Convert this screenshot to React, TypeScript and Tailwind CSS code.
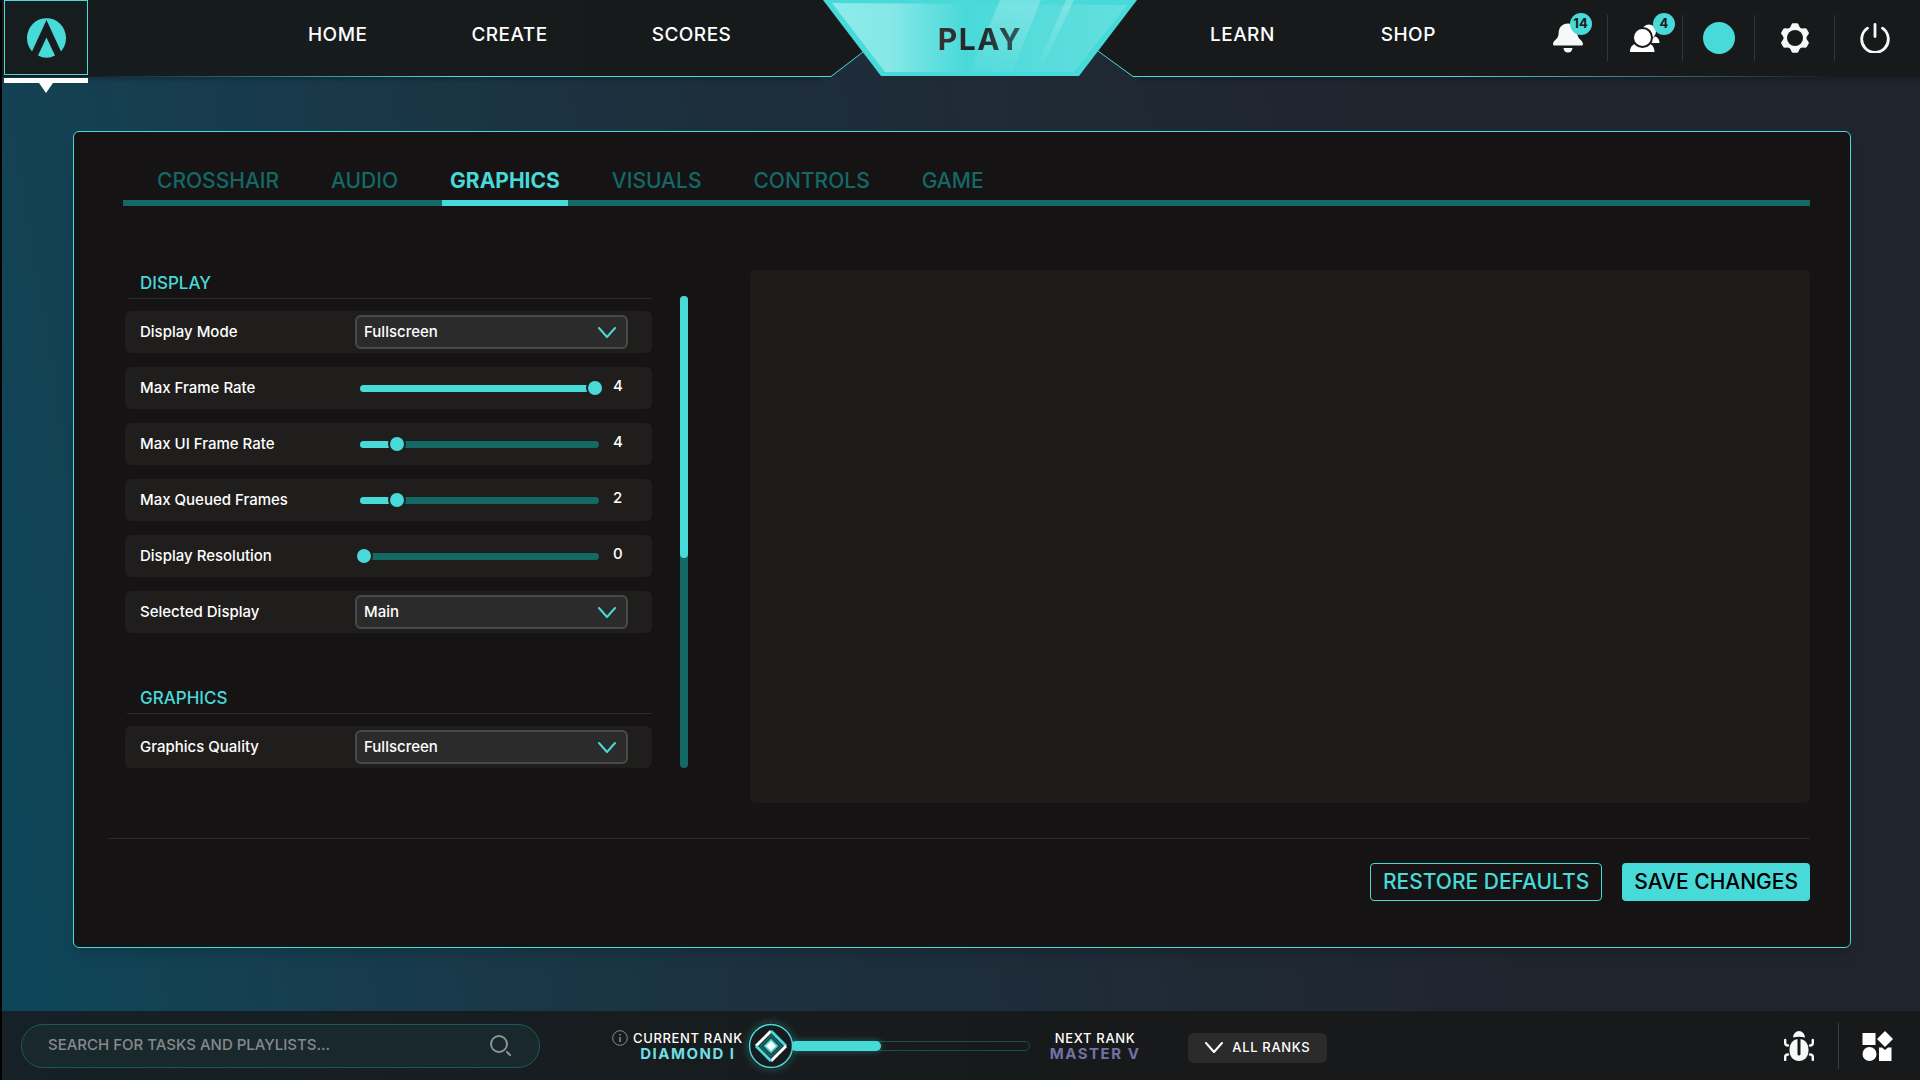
import clsx from 'clsx'
import React, { useId, useState } from 'react'

const TABS = ['CROSSHAIR', 'AUDIO', 'GRAPHICS', 'VISUALS', 'CONTROLS', 'GAME']

const Logo = () => (
  <svg width="39" height="41" viewBox="0 0 39 41" fill="#48d9d9">
    <path d="M5 34.5A19.5 20 0 1 1 34 34.5L19.5 3Z" />
    <path d="M19.5 20.5L28 38.6Q19.5 43 11 38.6Z" />
  </svg>
)

const BellIcon = () => (
  <svg width="30" height="30" viewBox="0 0 30 30" fill="#f7f8f8">
    <path d="M15 0.500C9 0.500 5.600 4.800 5.600 10.500C5.600 16.500 0 17 0 21Q0 22.500 1.500 22.500H28.500Q30 22.500 30 21C30 17 24.400 16.500 24.400 10.500C24.400 4.800 21 0.500 15 0.500Z" />
    <path d="M10.500 25H19.500A4.500 4.500 0 0 1 10.500 25Z" />
  </svg>
)

const FriendsIcon = () => (
  <svg width="30" height="28" viewBox="0 0 30 28" fill="#fff">
    <circle cx="19" cy="7.500" r="7" />
    <path d="M21 19C21 15 23 13 25.500 12.500C28 13.500 29.500 16 29.500 19Z" />
    <path d="M0 28C0 22.500 3 20 7 19.500L12.500 21L18 19.500C22 20 24.500 23 24.500 28Z" />
    <circle cx="12.500" cy="13.500" r="9.500" stroke="#17191a" strokeWidth="2" />
  </svg>
)

const GearIcon = () => (
  <svg width="30" height="30" viewBox="0 0 30 30">
    <g fill="#f7f8f8">
      <circle cx="15" cy="15" r="11.500" />
      {[0, 60, 120, 180, 240, 300].map((deg) => (
        <path
          key={deg}
          d="M9.500 6L11.500 1.500Q12 0.300 13 0.300H17Q18 0.300 18.500 1.500L20.500 6Z"
          transform={`rotate(${deg} 15 15)`}
        />
      ))}
    </g>
    <circle cx="15" cy="15" r="8" fill="#17191a" />
  </svg>
)

const PowerIcon = () => (
  <svg
    width="30"
    height="30"
    viewBox="0 0 30 30"
    fill="none"
    stroke="#f7f8f8"
    strokeWidth="2.800"
    strokeLinecap="round"
  >
    <path d="M15 1.500V13.500" />
    <path d="M7.500 5.200A13.300 13.300 0 1 0 22.500 5.200" />
  </svg>
)

const SearchIcon = () => (
  <svg
    width="22"
    height="22"
    viewBox="0 0 22 22"
    fill="none"
    stroke="#8b9293"
    strokeWidth="2"
    strokeLinecap="round"
  >
    <circle cx="9" cy="9" r="8" />
    <path d="M17 17L20 20" />
  </svg>
)

const Chevron = ({ className }: { className?: string }) => (
  <svg
    width="18"
    height="11"
    viewBox="0 0 18 11"
    fill="none"
    stroke="currentColor"
    strokeWidth="2"
    strokeLinecap="round"
    strokeLinejoin="round"
    className={className}
  >
    <path d="M1 1L9 10L17 1" />
  </svg>
)

const BugIcon = () => (
  <svg width="30" height="30" viewBox="0 0 30 30" fill="#f7f8f8">
    <path d="M9 6.500A6 6.500 0 0 1 21 6.500Q15 5 9 6.500Z" />
    <path d="M15 8C9 8 5.500 12.500 5.500 19C5.500 26 9.500 30 15 30S24.500 26 24.500 19C24.500 12.500 21 8 15 8Z" />
    <path d="M15 8V23" stroke="#17191a" strokeWidth="3" strokeLinecap="round" />
    <g fill="none" stroke="#f7f8f8" strokeWidth="2.400" strokeLinecap="round">
      <path d="M1.200 9V12Q1.200 14.500 4 14.500" />
      <path d="M28.800 9V12Q28.800 14.500 26 14.500" />
      <path d="M1.200 29V26Q1.200 23.500 4 23.500" />
      <path d="M28.800 29V26Q28.800 23.500 26 23.500" />
    </g>
  </svg>
)

const AppsIcon = () => (
  <svg width="31" height="30" viewBox="0 0 31 30" fill="#fff">
    <path d="M0.500 2H13.500V14H0.500Z" />
    <path d="M23 0L31 8L23 16L15 8Z" />
    <circle cx="7.500" cy="23" r="7" />
    <path d="M17 16.500H20L23 19L26 16.500H29.500V30H17Z" />
  </svg>
)

const RankEmblem = () => (
  <svg width="46" height="46" viewBox="0 0 46 46" fill="none">
    <circle cx="23" cy="23" r="21.500" fill="#171b1d" stroke="#48d9d9" strokeWidth="1.500" />
    <path d="M8 23L23 8" stroke="#fff" strokeWidth="3" />
    <path d="M23 8L38 23" stroke="#48d9d9" strokeWidth="3" />
    <path d="M38 23L23 38" stroke="#fff" strokeWidth="3" />
    <path d="M23 38L8 23" stroke="#48d9d9" strokeWidth="3" />
    <path d="M23 12.500L33.500 23L23 33.500L12.500 23Z" stroke="#146866" strokeWidth="2" />
    <path d="M23 15.500L30.500 23L23 30.500L15.500 23Z" fill="#48d9d9" stroke="#2f9c9c" />
    <path d="M23 18L28 23L23 28L18 23Z" fill="#fff" />
  </svg>
)

const InfoIcon = () => (
  <svg width="16" height="16" viewBox="0 0 16 16" fill="none" stroke="#85898a">
    <circle cx="8" cy="8" r="7.300" />
    <path d="M8 7V12M8 4V5.500" strokeWidth="1.500" />
  </svg>
)

const PlayBadge = () => (
  <svg width="320" height="77" viewBox="0 0 320 77" fill="none">
    <defs>
      <linearGradient id="playFill">
        <stop offset="0" stopColor="#8deaea" />
        <stop offset="0.200" stopColor="#86e8e8" />
        <stop offset="0.450" stopColor="#4ad9d9" />
        <stop offset="0.700" stopColor="#56dcdb" />
        <stop offset="1" stopColor="#62dfde" />
      </linearGradient>
      <linearGradient id="shine" x1="0" y1="0" x2="0" y2="1">
        <stop offset="0" stopColor="#fff" stopOpacity="0.240" />
        <stop offset="1" stopColor="#fff" stopOpacity="0.030" />
      </linearGradient>
    </defs>
    <path d="M0 0H3L43 52L11 76H0Z" fill="#17191a" />
    <path d="M320 0H317L278 51L313 76H320Z" fill="#17191a" />
    <path d="M0 76.500H11L43 52M278 51L313 76.500H320" stroke="#48d9d9" />
    <path d="M3 0H317L259 76H61Z" fill="#48d9d9" />
    <path d="M12 3L307 5L254 72H65Z" fill="url(#playFill)" />
    <path d="M180 0H221L192 72H150Z" fill="url(#shine)" />
    <path d="M246 0H254L223 66H217Z" fill="url(#shine)" />
  </svg>
)

const NavLink = ({ children }: { children: React.ReactNode }) => (
  <a href="#" className="text-[19px] leading-6 font-medium tracking-wide text-white">
    {children}
  </a>
)

const Badge = ({ count, className }: { count: number; className: string }) => (
  <span
    className={clsx(
      'absolute flex size-[22px] items-center justify-center rounded-full bg-[#48d9d9] text-[13px] font-bold text-[#17191a]',
      className
    )}
  >
    {count}
  </span>
)

const Header = () => (
  <header className="grid grid-cols-[818fr_320px_780fr]">
    <div className="flex h-[77px] bg-linear-to-r from-[#161d1f] to-[#17191a] shadow-[0_3px_4px_#0003]">
      <a
        href="#"
        aria-label="Home"
        className="relative z-10 ml-[2px] flex h-[75px] w-[84px] shrink-0 items-center justify-center border border-[#48d9d9] bg-[#171d1f] pb-px"
      >
        <Logo />
        <span className="absolute top-[77px] -left-px h-[5px] w-[84px] bg-white" />
        <span className="absolute top-[82px] border-x-[7px] border-t-[10px] border-x-transparent border-t-white" />
      </a>
      <div className="flex flex-1 flex-col">
        <nav className="flex h-[76px] items-center gap-[104px] pb-[6px] pl-[220px]">
          <NavLink>HOME</NavLink>
          <NavLink>CREATE</NavLink>
          <NavLink>SCORES</NavLink>
        </nav>
        <div className="h-px bg-linear-to-r from-transparent via-[#48d9d9] via-50% to-[#48d9d9]" />
      </div>
    </div>

    <a href="#" className="relative block h-[77px]">
      <PlayBadge />
      <span className="absolute inset-0 flex items-center justify-center bg-linear-to-r from-[#333] from-40% via-[#1f1f1f] via-48% to-[#2f6a6d] to-65% bg-clip-text text-3xl font-bold tracking-wider text-transparent">
        PLAY
      </span>
    </a>

    <div className="flex h-[77px] flex-col bg-[#17191a] shadow-[0_3px_4px_#0003]">
      <div className="flex h-[76px] items-center justify-between">
        <nav className="flex gap-[106px] pb-[6px] pl-[70px]">
          <NavLink>LEARN</NavLink>
          <NavLink>SHOP</NavLink>
        </nav>
        <div className="flex h-[46px] items-center divide-x divide-[#333536] pr-[5px]">
          <button aria-label="Notifications" className="flex h-full w-20 items-center justify-center">
            <span className="relative">
              <BellIcon />
              <Badge count={14} className="-top-[10px] -right-[9px]" />
            </span>
          </button>
          <button aria-label="Friends" className="flex h-full w-[75px] items-center justify-center">
            <span className="relative">
              <FriendsIcon />
              <Badge count={4} className="-top-[11px] -right-[15px]" />
            </span>
          </button>
          <button aria-label="Profile" className="flex h-full w-[72px] items-center justify-center">
            <span className="size-8 rounded-full bg-[#48d9d9]" />
          </button>
          <button aria-label="Settings" className="flex h-full w-20 items-center justify-center">
            <GearIcon />
          </button>
          <button aria-label="Quit" className="flex h-full w-20 items-center justify-center">
            <PowerIcon />
          </button>
        </div>
      </div>
      <div className="h-px bg-linear-to-r from-[#48d9d9] from-40% to-transparent to-90%" />
    </div>
  </header>
)

const ROW = 'flex h-[42px] items-center rounded-md bg-[#1f1e1c] pl-[15px]'
const LABEL = 'w-[215px] shrink-0 text-[15px] font-medium text-white'

interface SelectRowProps {
  label: string
  options: string[]
}

const SelectRow: React.FC<SelectRowProps> = ({ label, options }) => {
  const id = useId()

  return (
    <div className={ROW}>
      <label htmlFor={id} className={LABEL}>
        {label}
      </label>
      <div className="relative mr-6 flex-1">
        <select
          id={id}
          className="block h-[34px] w-full appearance-none rounded-md border-2 border-[#484949] bg-[#2b2b2b] px-[7px] text-[15px] font-medium text-white"
        >
          {options.map((option) => (
            <option key={option}>{option}</option>
          ))}
        </select>
        <Chevron className="pointer-events-none absolute top-3 right-3 text-[#48d9d9]" />
      </div>
    </div>
  )
}

interface SliderRowProps {
  label: string
  initial: number
  max: number
}

const SliderRow: React.FC<SliderRowProps> = ({ label, initial, max }) => {
  const id = useId()
  const [value, setValue] = useState(initial)

  return (
    <div className={ROW}>
      <label htmlFor={id} className={LABEL}>
        {label}
      </label>
      <div className="relative h-[18px] flex-1">
        <div className="absolute inset-x-[5px] top-[6px] h-[7px] overflow-hidden rounded-full bg-[#146866]">
          <div
            className="h-full bg-[#48d9d9]"
            style={{ width: `${(value / max) * 100}%` }}
          />
        </div>
        <input
          id={id}
          type="range"
          min={0}
          max={max}
          value={value}
          onChange={(e) => setValue(Number(e.target.value))}
          className="absolute inset-0 h-[18px] w-full appearance-none bg-transparent [&::-webkit-slider-thumb]:size-[18px] [&::-webkit-slider-thumb]:appearance-none [&::-webkit-slider-thumb]:rounded-full [&::-webkit-slider-thumb]:border-2 [&::-webkit-slider-thumb]:border-[#1f1e1c] [&::-webkit-slider-thumb]:bg-[#48d9d9]"
        />
      </div>
      <output
        htmlFor={id}
        className="w-12 pb-1 pl-[9px] text-[15px] font-medium text-white"
      >
        {value}
      </output>
    </div>
  )
}

const SectionTitle = ({ children }: { children: React.ReactNode }) => (
  <h2 className="ml-[2px] border-b border-[#2b2a2a] pt-px pb-[3px] pl-[13px] text-[17px] leading-6 font-medium text-[#48d9d9]">
    {children}
  </h2>
)

const SettingsList = () => (
  <div className="w-[527px] shrink-0">
    <section>
      <SectionTitle>DISPLAY</SectionTitle>
      <div className="mt-3 flex flex-col gap-[14px]">
        <SelectRow label="Display Mode" options={['Fullscreen', 'Windowed']} />
        <SliderRow label="Max Frame Rate" initial={4} max={4} />
        <SliderRow label="Max UI Frame Rate" initial={4} max={28} />
        <SliderRow label="Max Queued Frames" initial={2} max={14} />
        <SliderRow label="Display Resolution" initial={0} max={4} />
        <SelectRow label="Selected Display" options={['Main']} />
      </div>
    </section>
    <section className="mt-[52px]">
      <SectionTitle>GRAPHICS</SectionTitle>
      <div className="mt-3">
        <SelectRow label="Graphics Quality" options={['Fullscreen']} />
      </div>
    </section>
  </div>
)

const SettingsPanel = () => {
  const [active, setActive] = useState('GRAPHICS')

  return (
    <div className="rounded-md border border-[#48d9d9] bg-[#151314] pr-10 pb-[46px] pl-[34px] shadow-lg">
      <div
        role="tablist"
        className="mt-[32px] ml-[15px] flex gap-9 border-b-[6px] border-[#146866] pl-[26px]"
      >
        {TABS.map((tab) => (
          <button
            key={tab}
            role="tab"
            aria-selected={tab === active}
            onClick={() => setActive(tab)}
            className={clsx(
              '-mb-[6px] border-b-[6px] px-2 pt-px pb-[3px] text-[21px] leading-8',
              tab === active
                ? 'border-[#48d9d9] font-bold text-[#48d9d9]'
                : 'border-transparent font-medium text-[#146866]'
            )}
          >
            {tab}
          </button>
        ))}
      </div>

      <div className="mt-16 ml-[17px] flex">
        <SettingsList />
        <div className="mt-[26px] mb-[35px] ml-7 w-2 shrink-0 rounded-full bg-[#146866]">
          <div className="h-[262px] rounded-full bg-[#48d9d9]" />
        </div>
        <div className="ml-[62px] h-[533px] flex-1 rounded-md bg-[#1e1a19]" />
      </div>

      <div className="mt-[35px] flex justify-end gap-5 border-t border-[#2a2828] pt-6 text-[21px] font-medium">
        <button className="h-[38px] rounded border border-[#48d9d9] px-3 text-[#48d9d9]">
          RESTORE DEFAULTS
        </button>
        <button className="h-[38px] rounded bg-[#48d9d9] px-3 text-black">
          SAVE CHANGES
        </button>
      </div>
    </div>
  )
}

const Footer = () => (
  <footer className="flex h-[69px] items-center bg-linear-to-r from-[#152127] via-[#171c1e] via-35% to-[#17191a] to-60% pr-[27px] pl-[19px]">
    <label className="flex h-11 w-[519px] items-center rounded-full border border-[#1b5a5c] bg-[#19282c] pr-[27px] pl-[26px]">
      <input
        type="search"
        aria-label="Search"
        placeholder="SEARCH FOR TASKS AND PLAYLISTS..."
        className="flex-1 bg-transparent text-[15px] font-medium text-white outline-none placeholder:text-[#858a8d]"
      />
      <SearchIcon />
    </label>

    <div className="mt-px ml-[72px] flex items-start gap-[5px]">
      <InfoIcon />
      <div className="text-center">
        <div className="text-[13px] leading-4 font-medium tracking-wider text-white">
          CURRENT RANK
        </div>
        <div className="text-[15px] leading-4 font-bold tracking-widest text-[#6fdfe2]">
          DIAMOND I
        </div>
      </div>
    </div>
    <div className="ml-[5px] flex items-center">
      <div className="z-10 rounded-full shadow-[0_0_8px_#48d9d955]">
        <RankEmblem />
      </div>
      <div className="-ml-1 h-[10px] w-[240px] rounded-full border border-[#1d4a4b]">
        <div className="-my-px h-[10px] w-[38%] rounded-full bg-[#48d9d9] shadow-[0_0_6px_#48d9d966]" />
      </div>
    </div>
    <div className="mt-px ml-5 text-center">
      <div className="text-[13px] leading-4 font-medium tracking-wider text-white">
        NEXT RANK
      </div>
      <div className="text-[15px] leading-4 font-bold tracking-widest text-[#7272a6]">
        MASTER V
      </div>
    </div>
    <button className="mt-1 ml-12 flex h-[30px] items-center gap-[9px] rounded-md bg-[#2b2b2b] px-[17px] text-[13px] font-medium tracking-wider text-white">
      <Chevron />
      ALL RANKS
    </button>

    <div className="ml-auto flex h-[46px] items-center">
      <button aria-label="Report a bug" className="pr-6">
        <BugIcon />
      </button>
      <div className="h-full w-px bg-[#3a3c3d]" />
      <button aria-label="Apps" className="pl-[23px]">
        <AppsIcon />
      </button>
    </div>
  </footer>
)

const App: React.FC = () => (
  <div className="flex min-h-screen flex-col border-l-2 border-black bg-linear-80 from-[#0f4558] from-3% via-[#1c303e] via-38% to-[#20242d] to-75% font-['Inter',sans-serif]">
    <Header />
    <main className="flex-1 pt-[54px] pr-[69px] pb-[63px] pl-[71px]">
      <SettingsPanel />
    </main>
    <Footer />
  </div>
)

export default App
